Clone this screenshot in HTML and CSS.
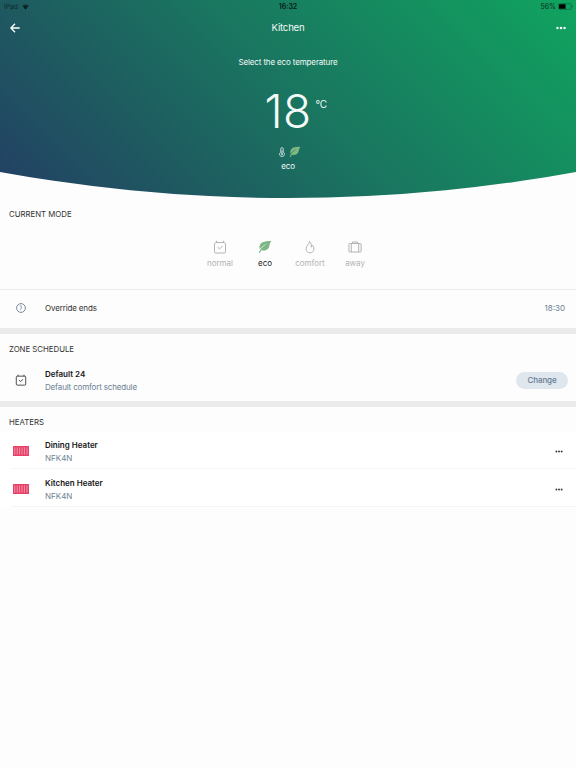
FILE: index.html
```html
<!DOCTYPE html>
<html lang="en">
<head>
    <meta charset="UTF-8">
    <meta name="viewport" content="width=device-width, initial-scale=1.0">
    <title>Kitchen</title>
    <link rel="stylesheet" href="styles.css">
</head>
<body>
    <svg class="symbols" width="0" height="0">
        <symbol id="leaf" viewBox="0 0 14 14">
            <path fill="currentColor" d="M13.4 1C9 .6 4.700 1.200 2.600 3.700 1.200 5.500 1.200 7.600 1.900 8.900 4 6.500 6.100 4.800 8.700 3.900 5.200 5.900 2.300 8.500.7 12.600L1.900 13.100C2.300 12 2.800 11 3.400 10.200 6.500 11.100 9.400 10.100 10.700 7.700 12.100 5.200 11.300 2.800 13.400 1Z"/>
        </symbol>
        <symbol id="calendar" viewBox="0 0 14 14">
            <g fill="none" stroke="currentColor">
                <rect x="1.500" y="2.500" width="11" height="10.500" rx="1.200"/>
                <path d="M3.500.8v2M10.500.8v2M4.600 7.200l1.900 1.500 3-2.400"/>
            </g>
        </symbol>
        <symbol id="radiator" viewBox="0 0 16 10">
            <rect width="16" height="10" rx=".6" fill="#e73f66"/>
            <path d="M1.800 1.400v7.200M4.200 1.400v7.200M6.600 1.400v7.200M9 1.400v7.200M11.400 1.400v7.200M14 1.400v7.200" stroke="#f7aabc" stroke-width=".8"/>
        </symbol>
        <symbol id="dots" viewBox="0 0 10 4">
            <g fill="currentColor">
                <circle cx="1.500" cy="2" r="1.250"/>
                <circle cx="5" cy="2" r="1.250"/>
                <circle cx="8.500" cy="2" r="1.250"/>
            </g>
        </symbol>
    </svg>

    <header class="hero">
        <div class="status-bar">
            <div class="status-left">
                <span>iPad</span>
                <svg width="7" height="6" viewBox="0 0 8 6"><path d="M4 6L0 1.700C2.300-.4 5.700-.4 8 1.700Z" fill="#123a35"/><path d="M4 5.700L2.300 3.800C3.300 3 4.700 3 5.700 3.800ZM1.300 2.600C3 1.200 5 1.200 6.700 2.600" fill="#061413"/></svg>
            </div>
            <span class="status-time">16:32</span>
            <div class="status-right">
                <span>56%</span>
                <svg width="15" height="7" viewBox="0 0 15 7"><rect x=".4" y=".6" width="12.700" height="5.800" rx="1.300" fill="none" stroke="#0b6d40" stroke-width=".8"/><rect x="1" y="1.200" width="6.600" height="4.600" rx=".4" fill="#000"/><path d="M14 2.500v2" stroke="#0b6d40"/></svg>
            </div>
        </div>
        <nav class="nav-bar">
            <svg width="10" height="10" viewBox="0 0 10 10" fill="none" stroke="#fff" stroke-width="1.300"><path d="M9.700 5H1.200M5 .8L.9 5 5 9.200"/></svg>
            <h1>Kitchen</h1>
            <svg class="nav-more" width="10" height="4"><use href="#dots"/></svg>
        </nav>
        <p class="hint">Select the eco temperature</p>
        <div class="temperature">
            <span class="degrees">18</span>
            <span class="unit">°C</span>
        </div>
        <div class="hero-icons">
            <svg width="8" height="10" viewBox="0 0 8 10" fill="none" stroke="#d7e8e3" stroke-width=".9"><path d="M2.800 5.200V1.700C2.800.2 5.200.2 5.200 1.700V5.200C7.600 6.600 6.500 9.400 4 9.400S.4 6.600 2.800 5.200Z"/><path d="M4 3.500V7"/><circle cx="4" cy="7.200" r=".7"/></svg>
            <svg class="leaf" width="12" height="12"><use href="#leaf"/></svg>
        </div>
        <p class="hero-mode">eco</p>
    </header>

    <section class="modes">
        <h2>CURRENT MODE</h2>
        <div class="mode-list">
            <div class="mode">
                <svg width="14" height="14"><use href="#calendar"/></svg>
                <span>normal</span>
            </div>
            <div class="mode active">
                <svg class="leaf" width="14" height="14"><use href="#leaf"/></svg>
                <span>eco</span>
            </div>
            <div class="mode">
                <svg width="14" height="14" viewBox="0 0 14 14" fill="none" stroke="currentColor"><path d="M6.400 1.300C7 3.500 3.100 5.500 3.100 8.800 3.100 11.300 4.800 12.800 7 12.800S10.900 11.200 10.900 9C10.900 7.400 10.200 6 9.200 5 9.100 6.200 8.700 6.900 8 7.200 8.700 4.800 8 2.500 6.400 1.300Z"/></svg>
                <span>comfort</span>
            </div>
            <div class="mode">
                <svg width="14" height="14" viewBox="0 0 14 14" fill="none" stroke="currentColor"><rect x=".9" y="3.500" width="12.200" height="8.500" rx=".7"/><path d="M4.500 3.400V2h5v1.400M3.300 3.500V12M10.700 3.500V12"/></svg>
                <span>away</span>
            </div>
        </div>
    </section>

    <section class="override">
        <svg class="row-icon" width="10" height="10" viewBox="0 0 10 10" fill="none" stroke="#667d94" stroke-width=".9"><circle cx="5" cy="5" r="4.400"/><path d="M3.800 2.800H5.300V5.300L4.400 7.200" stroke-width=".7"/></svg>
        <span class="override-label">Override ends</span>
        <span class="override-time">18:30</span>
    </section>

    <section class="schedule">
        <h2>ZONE SCHEDULE</h2>
        <div class="row">
            <svg class="row-icon" width="12" height="12"><use href="#calendar"/></svg>
            <div class="row-text">
                <strong>Default 24</strong>
                <span class="schedule-name">Default comfort schedule</span>
            </div>
            <button class="change-button">Change</button>
        </div>
    </section>

    <section class="heaters">
        <h2>HEATERS</h2>
        <div class="row">
            <svg class="row-icon" width="16" height="10"><use href="#radiator"/></svg>
            <div class="row-text">
                <strong>Dining Heater</strong>
                <span>NFK4N</span>
            </div>
            <svg class="row-more" width="8" height="3"><use href="#dots"/></svg>
        </div>
        <div class="row">
            <svg class="row-icon" width="16" height="10"><use href="#radiator"/></svg>
            <div class="row-text">
                <strong>Kitchen Heater</strong>
                <span>NFK4N</span>
            </div>
            <svg class="row-more" width="8" height="3"><use href="#dots"/></svg>
        </div>
    </section>
</body>
</html>
```
FILE: styles.css
```css
* {
    margin: 0;
    padding: 0;
    box-sizing: border-box;
}

body {
    background-color: #fdfdfd;
    color: #333;
    font-family: 'Inter', sans-serif;
    font-size: 8px;
    line-height: 12px;
    min-height: 100vh;
}

svg {
    display: block;
    flex-shrink: 0;
}

.symbols {
    display: none;
}

.leaf {
    color: #7db783;
}

h2 {
    font-size: 7.8px;
    font-weight: 400;
    line-height: 12px;
    padding-left: 9px;
}

.hero {
    height: 198px;
    background: linear-gradient(45deg, #233f65 0%, #1e5b60 27%, #1a7460 50%, #10a45f 100%);
    clip-path: circle(1608px at 50% -1410px);
    color: #f4faf7;
    text-align: center;
}

.status-bar {
    display: grid;
    grid-template-columns: 1fr auto 1fr;
    align-items: center;
    height: 13px;
    padding: 0 4px;
    color: #0a2a26;
    font-size: 7px;
}

.status-left,
.status-right {
    display: flex;
    align-items: center;
    gap: 4px;
}

.status-left {
    font-size: 6.8px;
}

.status-right {
    justify-content: flex-end;
    gap: 2px;
    margin-right: -1px;
}

.status-time {
    color: #061c17;
    font-weight: 600;
}

.nav-bar {
    display: flex;
    justify-content: space-between;
    align-items: center;
    height: 31px;
    padding: 0 10px 1px;
}

h1 {
    font-size: 9.6px;
    font-weight: 400;
    letter-spacing: -0.2px;
}

.hint {
    margin-top: 12px;
    height: 12px;
    letter-spacing: -0.14px;
}

.temperature {
    display: grid;
    grid-template-columns: 1fr auto 1fr;
    height: 54px;
    margin-top: 16px;
}

.degrees {
    grid-column: 2;
    font-size: 46px;
    font-weight: 350;
    letter-spacing: 0.5px;
    line-height: 54px;
}

.unit {
    margin: 14px 0 0 4px;
    font-size: 10px;
    letter-spacing: -0.3px;
    text-align: left;
}

.hero-icons {
    display: flex;
    justify-content: center;
    align-items: center;
    gap: 3px;
    margin-top: 8px;
    padding-left: 2px;
}

.hero-mode {
    margin-top: 2px;
    letter-spacing: -0.1px;
}

.modes {
    height: 92px;
    padding-top: 10px;
    border-bottom: 1px solid #ececec;
}

.mode-list {
    display: flex;
    justify-content: center;
    margin-top: 20px;
    padding-right: 1px;
}

.mode {
    display: flex;
    flex-direction: column;
    align-items: center;
    gap: 3px;
    width: 45px;
    color: #b3b3b3;
    letter-spacing: -0.05px;
}

.mode.active {
    color: #222;
}

.override {
    display: flex;
    align-items: center;
    height: 38px;
    padding-bottom: 2px;
}

.row-icon {
    width: 42px;
}

.override-label {
    flex: 1;
    padding-left: 3px;
    letter-spacing: -0.15px;
}

.override-time {
    padding-right: 11px;
    color: #6b7f92;
}

.schedule,
.heaters {
    border-top: 6px solid #ebebeb;
}

.schedule {
    height: 73px;
    padding-top: 9px;
}

.schedule h2 {
    margin-bottom: 6px;
}

.schedule-name {
    letter-spacing: -0.16px;
}

.heaters {
    padding-top: 9px;
}

.heaters h2 {
    margin-bottom: 3px;
}

.row {
    display: flex;
    align-items: center;
    height: 38px;
}

.row-text {
    display: flex;
    flex: 1;
    flex-direction: column;
    gap: 1px;
    padding-left: 3px;
    color: #6b7f92;
}

.row-text strong {
    color: #161616;
    font-weight: 600;
}

.change-button {
    width: 52px;
    height: 17px;
    margin-right: 8px;
    border: none;
    border-radius: 9px;
    background-color: #dfe6ee;
    color: #667b90;
    font: 500 8px 'Inter', sans-serif;
    letter-spacing: -0.1px;
}

.heaters .row {
    padding-top: 2px;
    background: #fff linear-gradient(#f5f5f5, #f5f5f5) no-repeat 11px 100% / 100% 1px;
}

.heaters .row-icon {
    margin-top: -1px;
}

.row-more {
    margin-right: 13px;
    color: #333;
}
```
